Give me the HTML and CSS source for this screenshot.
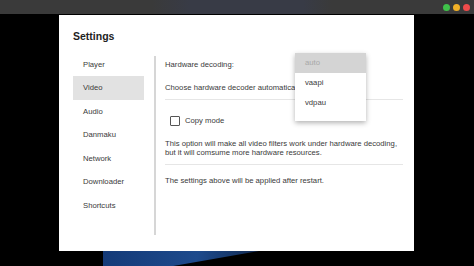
FILE: index.html
```html
<!DOCTYPE html>
<html lang="en">
<head>
    <meta charset="UTF-8">
    <meta name="viewport" content="width=device-width, initial-scale=1.0">
    <title>Settings</title>
    <link rel="stylesheet" href="styles.css">
</head>
<body>

<div class="titlebar">
    <span class="light green"></span>
    <span class="light yellow"></span>
    <span class="light red"></span>
</div>

<div class="stage">
    <div class="dialog">
        <h1 class="title">Settings</h1>

        <div class="main">
            <ul class="sidebar">
                <li>Player</li>
                <li class="active">Video</li>
                <li>Audio</li>
                <li>Danmaku</li>
                <li>Network</li>
                <li>Downloader</li>
                <li>Shortcuts</li>
            </ul>

            <div class="separator"></div>

            <div class="content">
                <div class="row">Hardware decoding:</div>
                <div class="row combo">Choose hardware decoder automatically</div>

                <label class="check">
                    <span class="box"></span>
                    Copy mode
                </label>

                <p class="note">This option will make all video filters work under hardware decoding,<br>but it will comsume more hardware resources.</p>

                <p class="restart">The settings above will be applied after restart.</p>
            </div>
        </div>

        <ul class="popup">
            <li class="current">auto</li>
            <li>vaapi</li>
            <li>vdpau</li>
        </ul>
    </div>

    <div class="video"></div>
</div>

</body>
</html>
```

FILE: styles.css
```css
*{
    padding: 0;
    margin: 0;
    box-sizing: border-box;
}

body{
    background-color: #000;
    font-family: "Liberation Sans", Arial, sans-serif;
    font-size: 7.7px;
    color: #3a3a3a;
    overflow: hidden;
}

.titlebar
{
    height: 14px;
    display: flex;
    align-items: center;
    justify-content: flex-end;
    gap: 3px;
    padding-right: 4px;
    background: linear-gradient(to right, #3a3a3a 32%, #383b46 40%, #383b46 64%, #3a3a3a 70%);
}

.light
{
    width: 7px;
    height: 7px;
    border-radius: 50%;
}
.green{ background-color: #3fc24a; }
.yellow{ background-color: #f1b027; }
.red{ background-color: #ef4b4b; }

.stage
{
    padding-top: 1px;
}

.dialog
{
    position: relative;
    width: 355px;
    height: 236px;
    margin-left: 59px;
    background-color: #fff;
    padding-left: 14px;
}

.title
{
    padding-top: 14px;
    font-size: 10.5px;
    line-height: 14px;
    font-weight: bold;
    color: #222;
    height: 37.5px;
}

.main
{
    display: flex;
    align-items: flex-start;
}

.sidebar
{
    list-style: none;
    width: 71px;
}

.sidebar li
{
    height: 23.5px;
    line-height: 23.5px;
    padding-left: 10px;
}

.sidebar li.active
{
    background-color: #e2e2e2;
}

.separator
{
    width: 2px;
    height: 179px;
    margin: 3.5px 0 0 10px;
    background-color: #d6d6d6;
}

.content
{
    width: 238px;
    margin-left: 9px;
}

.row
{
    height: 23.5px;
    line-height: 23.5px;
    white-space: nowrap;
}

.combo
{
    border-bottom: 1px solid #e6e6e6;
}

.check
{
    display: flex;
    align-items: center;
    gap: 5px;
    height: 22px;
    margin-top: 10px;
    padding-left: 5px;
}

.box
{
    width: 10px;
    height: 10px;
    border: 1px solid #555;
    border-radius: 1px;
}

.note
{
    margin-top: 7px;
    line-height: 9.5px;
    padding-bottom: 6px;
    border-bottom: 1px solid #e6e6e6;
    white-space: nowrap;
}

.restart
{
    margin-top: 11px;
    line-height: 10px;
}

.popup
{
    position: absolute;
    left: 236px;
    top: 38px;
    width: 71px;
    height: 68px;
    list-style: none;
    background-color: #fff;
    box-shadow: 0 2px 5px rgba(0, 0, 0, 0.3);
}

.popup li
{
    height: 20px;
    line-height: 20px;
    padding-left: 10px;
}

.popup li.current
{
    background-color: #d4d4d4;
    color: #a8a8a8;
}

.video
{
    width: 156px;
    height: 15px;
    margin-left: 103px;
    background: linear-gradient(100deg, #143a78, #1d4a8c 60%, #10284f);
    clip-path: polygon(0 0, 100% 0, 45% 100%, 0 100%);
}
```
